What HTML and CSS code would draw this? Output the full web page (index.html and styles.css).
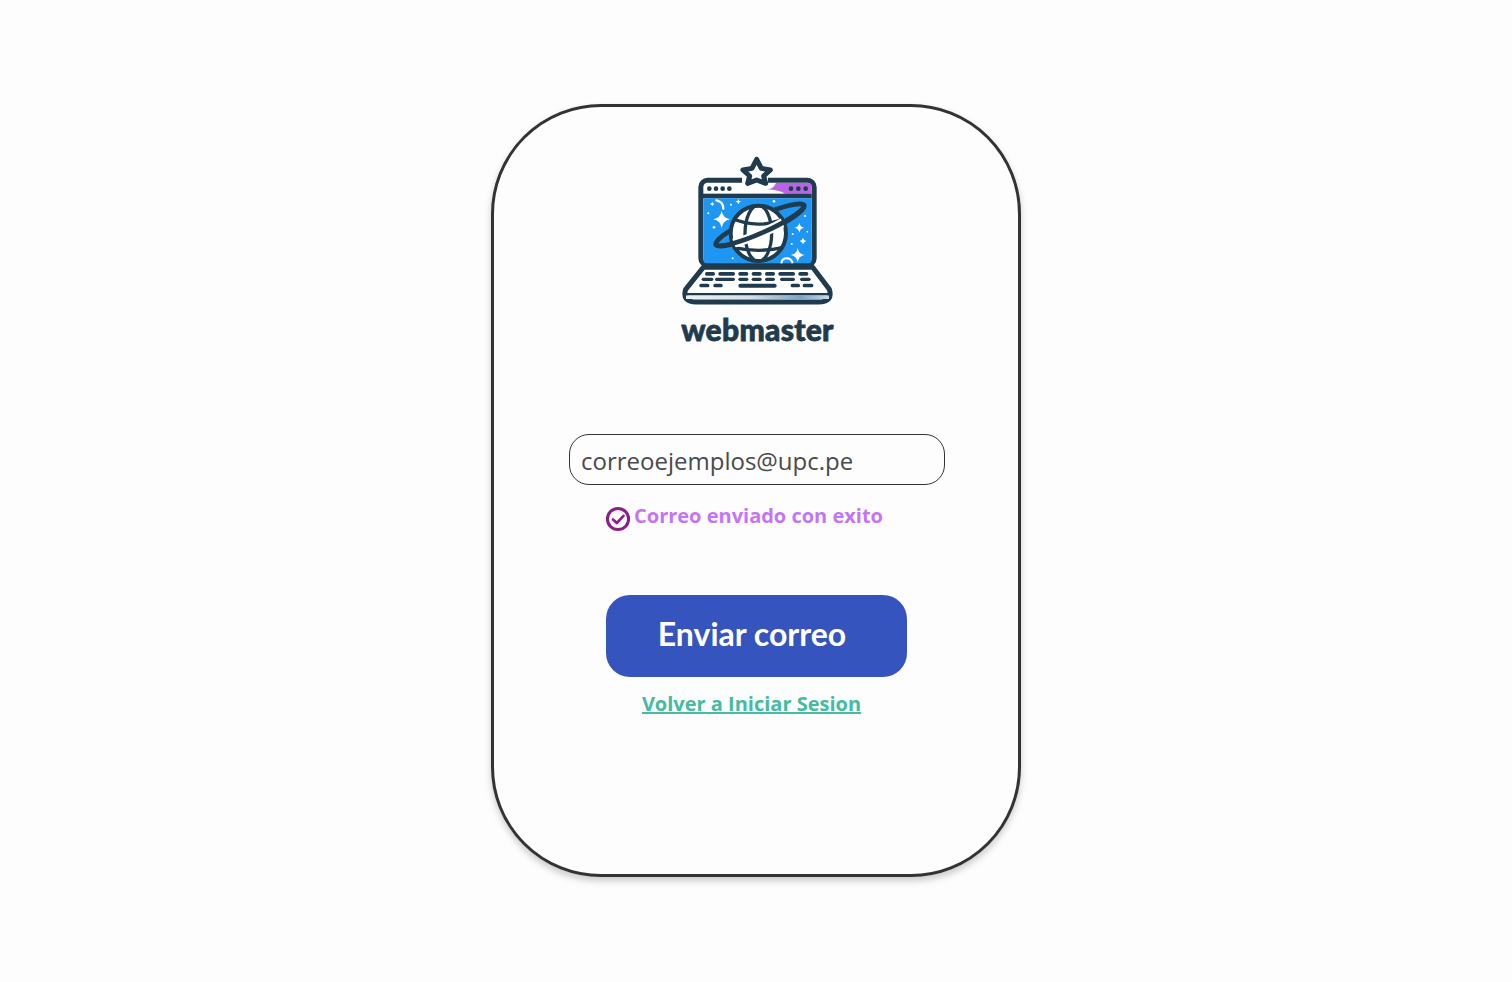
FILE: index.html
```html
<!DOCTYPE html>
<html lang="es">
<head>
<meta charset="utf-8">
<title>Recuperar contraseña</title>
<link rel="stylesheet" href="styles.css">
</head>
<body>
<main class="page">
  <section class="card">
    <div class="brand">
      <svg class="logo" viewBox="0 0 525 480" aria-hidden="true">
        <defs>
          <clipPath id="globeClip"><circle cx="265" cy="250" r="80"/></clipPath>
          <linearGradient id="strip" x1="0" x2="1" y1="0" y2="0">
            <stop offset="0" stop-color="#eef2f4"/>
            <stop offset="0.45" stop-color="#d5dfe6"/>
            <stop offset="0.8" stop-color="#7ea5c0"/>
            <stop offset="1" stop-color="#c9d8e2"/>
          </linearGradient>
        </defs>
        <!-- screen -->
        <rect x="92.5" y="91" width="340" height="254" rx="20" fill="#fff" stroke="#1f3b4d" stroke-width="15"/>
        <path d="M290 118 Q310 118 318 99 H415 Q425 99 425 108 V131 H345 Q330 120 290 118 Z" fill="#b964e6"/>
        <rect x="99" y="131" width="326" height="14" fill="#1f3b4d"/>
        <path d="M100 145 H425 V330 Q425 340 415 340 H110 Q100 340 100 330 Z" fill="#1e96f2"/>
        <g fill="#1f3b4d">
          <circle cx="118" cy="116" r="7"/><circle cx="138" cy="116" r="7"/><circle cx="158" cy="116" r="7"/><circle cx="178" cy="116" r="7"/>
          <circle cx="363" cy="116" r="7"/><circle cx="385" cy="116" r="7"/><circle cx="407" cy="116" r="7"/>
        </g>
        <!-- star -->
        <rect x="216" y="78" width="78" height="22" fill="#fdfdfd"/>
        <path d="M260 28 L274 55 L301 60 L281 78 L287 100 L260 90 L233 100 L239 78 L219 60 L246 55 Z" fill="#fff" stroke="#1f3b4d" stroke-width="15" stroke-linejoin="round"/>
        <!-- sparkles -->
        <g fill="#fff">
          <path d="M155 183 Q159 204 180 208 Q159 212 155 233 Q151 212 130 208 Q151 204 155 183Z"/>
          <path d="M388 218 Q390 231 403 233 Q390 235 388 248 Q386 235 373 233 Q386 231 388 218Z"/>
          <path d="M383 294 Q386 312 404 315 Q386 318 383 336 Q380 318 362 315 Q380 312 383 294Z"/>
          <path d="M399 263 Q401 271 409 273 Q401 275 399 283 Q397 275 389 273 Q397 271 399 263Z"/>
          <path d="M205 147 Q206 154 213 155 Q206 156 205 163 Q204 156 197 155 Q204 154 205 147Z"/>
          <path d="M127 155 Q128 161 134 162 Q128 163 127 169 Q126 163 120 162 Q126 161 127 155Z"/>
          <circle cx="312" cy="154" r="4"/><circle cx="183" cy="164" r="3"/><circle cx="115" cy="190" r="3"/><circle cx="132" cy="232" r="4"/>
          <circle cx="405" cy="198" r="3"/><circle cx="368" cy="252" r="3"/><circle cx="188" cy="325" r="3"/><circle cx="365" cy="282" r="3"/><circle cx="412" cy="245" r="2.5"/>
        </g>
        <path d="M139 151 Q160 155 160 176" fill="none" stroke="#fff" stroke-width="7" stroke-linecap="round"/>
        <path d="M334 340 Q336 325 350 325 Q364 325 368 340" fill="none" stroke="#fff" stroke-width="6"/>
        <!-- ring back -->
        <ellipse cx="270" cy="225" rx="145" ry="26" transform="rotate(-24 270 225)" fill="none" stroke="#1f3b4d" stroke-width="14"/>
        <!-- globe -->
        <circle cx="265" cy="250" r="83" fill="#fff" stroke="#1f3b4d" stroke-width="12"/>
        <g fill="none" stroke="#1f3b4d" stroke-width="10" clip-path="url(#globeClip)">
          <ellipse cx="265" cy="250" rx="40" ry="84"/>
          <path d="M185 205 Q265 240 345 205 M190 292 Q265 310 340 292"/>
        </g>
        <!-- ring front -->
        <g clip-path="url(#globeClip)">
          <path d="M138 284 A145 26 -24 0 0 402 166" fill="none" stroke="#fff" stroke-width="28"/>
        </g>
        <path d="M138 284 A145 26 -24 0 0 402 166" fill="none" stroke="#1f3b4d" stroke-width="14" stroke-linecap="round"/>
        <!-- base -->
        <path d="M100 352 H428 L478 418 Q490 456 445 456 H80 Q35 456 47 418 Z" fill="#fff" stroke="#1f3b4d" stroke-width="15" stroke-linejoin="round"/>
        <rect x="48" y="436" width="429" height="11" fill="url(#strip)"/>
        <rect x="44" y="429" width="437" height="7" rx="3" fill="#1f3b4d"/>
        <g fill="#1f3b4d">
          <rect x="105" y="366" width="30" height="11" rx="5"/><rect x="145" y="366" width="50" height="11" rx="5"/><rect x="205" y="366" width="30" height="11" rx="5"/><rect x="245" y="366" width="30" height="11" rx="5"/><rect x="285" y="366" width="30" height="11" rx="5"/><rect x="325" y="366" width="50" height="11" rx="5"/><rect x="385" y="366" width="30" height="11" rx="5"/>
          <rect x="95" y="383" width="35" height="10" rx="5"/><rect x="135" y="383" width="60" height="10" rx="5"/><rect x="205" y="383" width="30" height="10" rx="5"/><rect x="245" y="383" width="30" height="10" rx="5"/><rect x="285" y="383" width="30" height="10" rx="5"/><rect x="330" y="383" width="45" height="10" rx="5"/><rect x="390" y="383" width="32" height="10" rx="5"/>
          <rect x="88" y="401" width="30" height="11" rx="5"/><rect x="130" y="401" width="28" height="11" rx="5"/><rect x="205" y="401" width="115" height="12" rx="6"/><rect x="362" y="401" width="28" height="11" rx="5"/><rect x="398" y="401" width="32" height="11" rx="5"/>
        </g>
      </svg>
      <div class="wordmark">webmaster</div>
    </div>
    <input class="email" type="text" value="correoejemplos@upc.pe" aria-label="Correo">
    <div class="status">
      <svg class="check" viewBox="0 0 26 26" aria-hidden="true">
        <circle cx="13" cy="13" r="10.6" fill="none" stroke="#8a1f88" stroke-width="3"/>
        <path d="M8 13.5 L11.8 17 L18.5 9.8" fill="none" stroke="#8a1f88" stroke-width="2.6" stroke-linecap="round" stroke-linejoin="round"/>
      </svg>
      <span class="status-text">Correo enviado con exito</span>
    </div>
    <button class="send" type="button">Enviar correo</button>
    <a class="back" href="#">Volver a Iniciar Sesion</a>
  </section>
</main>
</body>
</html>
```
FILE: styles.css
```css
html, body {
  margin: 0;
  height: 100%;
  background: #fdfdfd;
}
.page {
  height: 981px;
  display: flex;
  align-items: center;
  justify-content: center;
}
.card {
  box-sizing: border-box;
  width: 530px;
  height: 773px;
  border: 3px solid #333;
  border-radius: 110px;
  background: #fdfdfd;
  box-shadow: 0 4px 7px rgba(0, 0, 0, 0.2);
  display: flex;
  flex-direction: column;
  align-items: center;
  padding-top: 43px;
}
.brand {
  display: flex;
  flex-direction: column;
  align-items: center;
  width: 175px;
  margin-left: 3px;
}
.logo {
  display: block;
  width: 175px;
  height: 160px;
}
.wordmark {
  font-family: "Lato", sans-serif;
  font-weight: 900;
  font-size: 30px;
  line-height: 36px;
  color: #1f3b4d;
  letter-spacing: 0.3px;
  -webkit-text-stroke: 0.8px #1f3b4d;
  margin-top: 1px;
  margin-bottom: 1px;
}
.email {
  box-sizing: border-box;
  display: block;
  width: 376px;
  height: 51px;
  margin: 86px 0 0 2px;
  padding: 2px 11px 0;
  border: 1px solid #333;
  border-radius: 20px;
  background: #fdfdfd;
  font-family: "Open Sans", sans-serif;
  font-size: 24px;
  color: #4a4a4a;
  outline: none;
}
.status {
  align-self: flex-start;
  display: flex;
  align-items: flex-start;
  margin: 17px 0 0 111px;
  gap: 3px;
}
.check {
  display: block;
  width: 26px;
  height: 26px;
  margin-top: 4px;
}
.status-text {
  font-family: "Open Sans", sans-serif;
  font-weight: 700;
  font-size: 20px;
  line-height: 27px;
  color: #c474f6;
}
.send {
  display: block;
  width: 301px;
  height: 82px;
  margin: 63px 0 0 1px;
  padding: 0 9px 6px 0;
  border: 0;
  border-radius: 24px;
  background: #3654bd;
  color: #fff;
  font-family: "Lato", sans-serif;
  font-weight: 700;
  font-size: 32px;
}
.back {
  display: block;
  margin: 13px 9px 0 0;
  font-family: "Open Sans", sans-serif;
  font-weight: 700;
  font-size: 20px;
  line-height: 27px;
  color: #45bb9f;
  text-decoration: underline;
}
```
